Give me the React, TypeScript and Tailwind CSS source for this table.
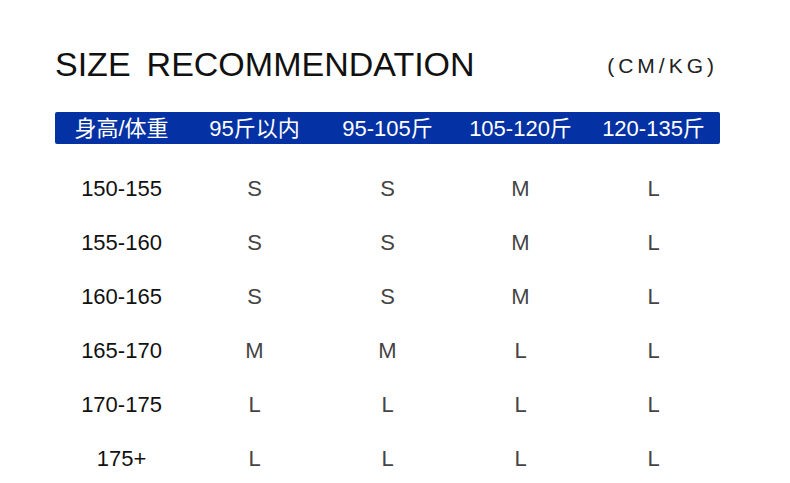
const headers = ["身高/体重", "95斤以内", "95-105斤", "105-120斤", "120-135斤"];

const rows: [string, string[]][] = [
  ["150-155", ["S", "S", "M", "L"]],
  ["155-160", ["S", "S", "M", "L"]],
  ["160-165", ["S", "S", "M", "L"]],
  ["165-170", ["M", "M", "L", "L"]],
  ["170-175", ["L", "L", "L", "L"]],
  ["175+", ["L", "L", "L", "L"]],
];

export default function App() {
  return (
    <main className="h-[483px] w-[790px] overflow-hidden bg-white font-['Liberation_Sans','Noto_Sans_CJK_SC',sans-serif]">
      <div className="ml-[55px] w-[665px] pt-[44px]">
        <div className="flex items-end justify-between">
          <h1 className="text-[34px] leading-[40px] text-[#111]">
            SIZE<span className="inline-block w-[16px]" />RECOMMENDATION
          </h1>
          <span className="mb-[6px] mr-[2px] text-[21px] leading-[24px] tracking-[4px] text-[#222]">
            (CM/KG)
          </span>
        </div>

        <div className="mt-[28px] grid h-[32px] grid-cols-5 items-center rounded-[2px] bg-[#0431a3] text-[22px] text-white">
          {headers.map((h) => (
            <div key={h} className="text-center">
              {h}
            </div>
          ))}
        </div>

        <div className="mt-[17px]">
          {rows.map(([height, sizes]) => (
            <div key={height} className="grid h-[54px] grid-cols-5 items-center text-[22px]">
              <div className="text-center text-[#111]">{height}</div>
              {sizes.map((s, i) => (
                <div key={i} className="text-center text-[#444]">
                  {s}
                </div>
              ))}
            </div>
          ))}
        </div>
      </div>
    </main>
  );
}
